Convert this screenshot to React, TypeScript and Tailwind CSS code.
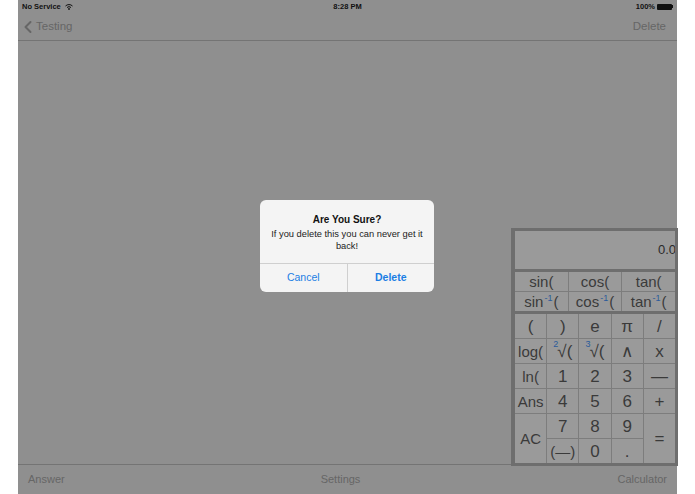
import { ChevronLeft } from 'lucide-react'

const font = { fontFamily: '"Liberation Sans", Arial, sans-serif' }

function Inv({ base }: { base: string }) {
  return (
    <span className="whitespace-nowrap">
      {base}
      <span className="inline-block relative -top-[6px] text-[9px] text-[#2a5a9a] mx-[1px]">-1</span>(
    </span>
  )
}

function Cell({ children, className = '' }: { children: React.ReactNode; className?: string }) {
  return (
    <div className={`flex items-center justify-center bg-[#9a9a9a] text-[#3a3a3a] ${className}`}>
      {children}
    </div>
  )
}

function Root({ n }: { n: string }) {
  return (
    <span className="flex items-start">
      <span className="text-[9px] leading-none text-[#2a5a9a] -mt-[3px]">{n}</span>
      <span className="-ml-[1px]">√(</span>
    </span>
  )
}

function Calculator() {
  return (
    <div className="w-[167px] bg-[#6e6e6e] pt-[3px] pb-[3px] pl-[4px] pr-[3px] flex flex-col gap-[3px]">
      <div className="h-[38px] bg-[#9a9a9a] flex items-center justify-end text-[13px] text-[#2a2a2a] overflow-hidden">
        <span className="-mr-[1px]">0.0</span>
      </div>
      <div className="grid grid-cols-3 grid-rows-[19px_19px] gap-[1px] bg-[#7d7d7d] text-[15px] leading-none">
        <Cell>sin(</Cell>
        <Cell>cos(</Cell>
        <Cell>tan(</Cell>
        <Cell><Inv base="sin" /></Cell>
        <Cell><Inv base="cos" /></Cell>
        <Cell><Inv base="tan" /></Cell>
      </div>
      <div className="grid grid-cols-5 grid-rows-[repeat(6,24px)] gap-[1px] bg-[#7d7d7d] text-[17px] leading-none">
        <Cell>(</Cell>
        <Cell>)</Cell>
        <Cell>e</Cell>
        <Cell>π</Cell>
        <Cell>/</Cell>
        <Cell className="text-[15px]">log(</Cell>
        <Cell><Root n="2" /></Cell>
        <Cell><Root n="3" /></Cell>
        <Cell>∧</Cell>
        <Cell>x</Cell>
        <Cell className="text-[15px]">ln(</Cell>
        <Cell>1</Cell>
        <Cell>2</Cell>
        <Cell>3</Cell>
        <Cell>—</Cell>
        <Cell className="text-[15px]">Ans</Cell>
        <Cell>4</Cell>
        <Cell>5</Cell>
        <Cell>6</Cell>
        <Cell>+</Cell>
        <Cell className="row-span-2 text-[15px]">AC</Cell>
        <Cell>7</Cell>
        <Cell>8</Cell>
        <Cell>9</Cell>
        <Cell className="row-span-2">=</Cell>
        <Cell className="text-[15px]">(—)</Cell>
        <Cell>0</Cell>
        <Cell>.</Cell>
      </div>
    </div>
  )
}

export default function App() {
  return (
    <div className="w-[695px] h-[494px] bg-white px-[18px] overflow-hidden" style={font}>
      <div className="relative h-full bg-[#8f8f8f] flex flex-col">
        <div className="h-[13px] flex items-center justify-between px-[4px] text-[7.5px] font-bold text-[#111]">
          <div className="flex items-center gap-[4px]">
            <span>No Service</span>
            <svg width="8" height="6" viewBox="0 0 8 6">
              <path d="M0.5 2 A5 5 0 0 1 7.5 2" stroke="#111" strokeWidth="1" fill="none" />
              <path d="M2 3.5 A3 3 0 0 1 6 3.5" stroke="#111" strokeWidth="1" fill="none" />
              <circle cx="4" cy="5" r="0.9" fill="#111" />
            </svg>
          </div>
          <span className="absolute left-1/2 -translate-x-1/2">8:28 PM</span>
          <div className="flex items-center gap-[2px]">
            <span>100%</span>
            <div className="flex items-center">
              <div className="w-[15px] h-[6px] bg-[#111] rounded-[1px]" />
              <div className="w-[1px] h-[3px] bg-[#111]" />
            </div>
          </div>
        </div>
        <div className="h-[28px] border-b border-[#747474] flex items-center justify-between text-[11.5px] text-[#666]">
          <div className="flex items-center">
            <ChevronLeft className="w-[20px] h-[20px]" strokeWidth={2.4} color="#666" />
            <span className="-ml-[2px]">Testing</span>
          </div>
          <span className="mr-[11px]">Delete</span>
        </div>
        <div className="flex-1 relative flex items-end justify-end">
          <div className="-mb-[2px] -mr-[1px]">
            <Calculator />
          </div>
          <div className="absolute left-[242px] top-[159px] w-[174px] h-[92px] rounded-[6px] bg-[#f4f4f4] flex flex-col overflow-hidden">
            <div className="flex-1 flex flex-col items-center pt-[12px] px-[8px] text-center">
              <div className="text-[10px] font-bold text-[#111]">Are You Sure?</div>
              <div className="text-[9.3px] leading-[12px] text-[#222] mt-[1px]">
                If you delete this you can never get it back!
              </div>
            </div>
            <div className="h-[29px] border-t border-[#cfcfcf] flex text-[10.5px] text-[#1b7ee4]">
              <div className="flex-1 flex items-center justify-center border-r border-[#cfcfcf]">Cancel</div>
              <div className="flex-1 flex items-center justify-center font-bold">Delete</div>
            </div>
          </div>
        </div>
        <div className="h-[30px] border-t border-[#747474] flex items-center px-[10px] text-[11px] text-[#666]">
          <span className="flex-1">Answer</span>
          <span className="-ml-[14px]">Settings</span>
          <span className="flex-1 text-right">Calculator</span>
        </div>
      </div>
    </div>
  )
}
